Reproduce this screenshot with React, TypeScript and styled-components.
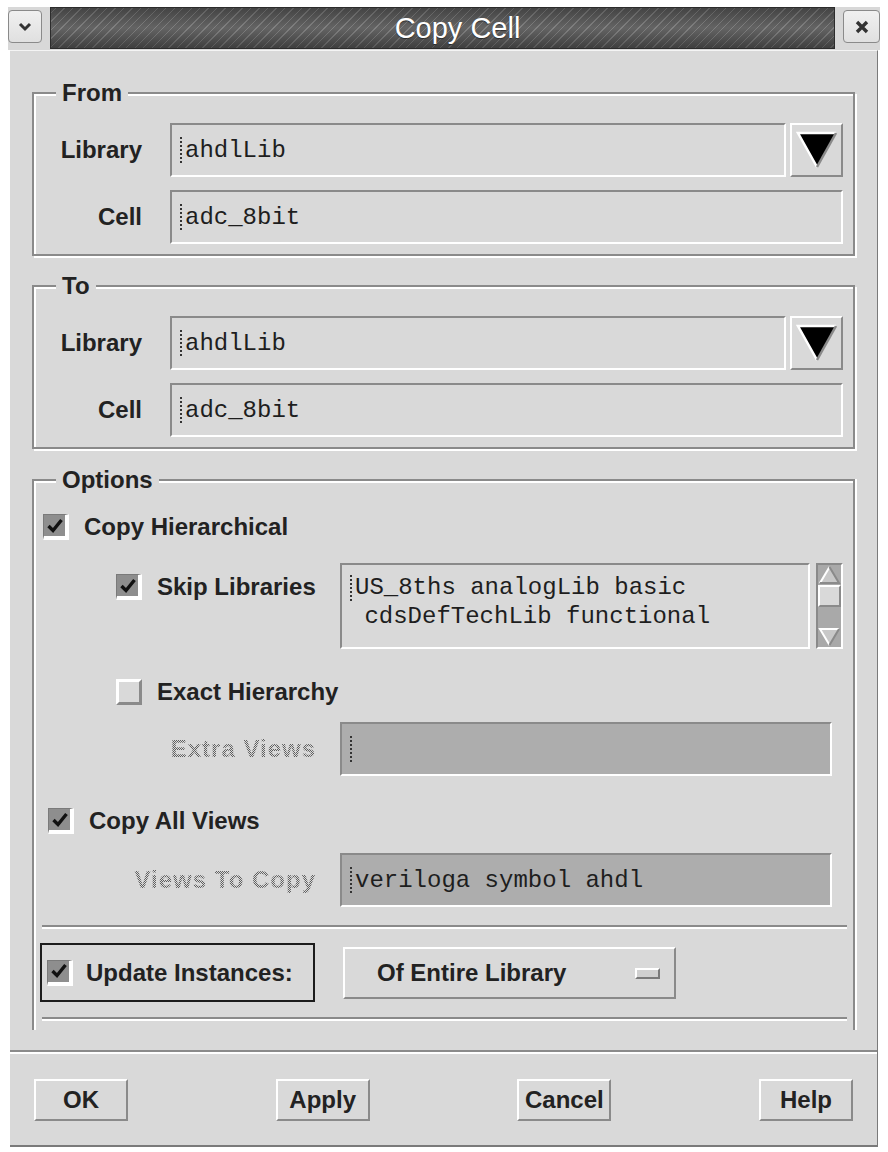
import React from "react";
import styled, { createGlobalStyle, css } from "styled-components";

const GlobalStyle = createGlobalStyle`
  html, body { margin: 0; padding: 0; background: #fff; }
  body { font-family: "Liberation Sans", Arial, sans-serif; color: #1e1e1e; }
`;

const Window = styled.div`
  margin: 7px 0 0 8px;
  width: 872px;
`;

const TitleBar = styled.div`
  display: flex;
  align-items: flex-start;
  gap: 8px;
  height: 43px;
  background: #d8d8d8;
`;

const FrameButton = styled.div<{ $w: number }>`
  width: ${(p) => p.$w}px;
  height: 33px;
  margin-top: 3px;
  box-sizing: border-box;
  border: 1px solid #8a8a8a;
  border-radius: 4px;
  background: linear-gradient(#f0f0f0, #e0e0e0);
  display: flex;
  align-items: center;
  justify-content: center;
  flex: none;
`;

const TitleStrip = styled.div`
  flex: 1;
  height: 42px;
  box-sizing: border-box;
  border: 1px solid #2c2c2c;
  padding-left: 30px;
  background:
    linear-gradient(to bottom, rgba(0, 0, 0, 0.25), rgba(255, 255, 255, 0.06) 50%, rgba(0, 0, 0, 0.3)),
    repeating-linear-gradient(135deg, #5a5a5a 0 3px, #7a7a7a 3px 4px, #5a5a5a 4px 6px);
  display: flex;
  align-items: center;
  justify-content: center;
  color: #fff;
  font-size: 29px;
  text-shadow: 0 1px 1px rgba(0, 0, 0, 0.5);
`;

const Body = styled.div`
  margin-left: 2px;
  width: 868px;
  box-sizing: border-box;
  background: #d9d9d9;
  border-top: 1px solid #f4f4f4;
  border-right: 1px solid #7a7a7a;
  border-bottom: 2px solid #7a7a7a;
  padding: 30px 0 24px 0;
  display: flex;
  flex-direction: column;
`;

const Group = styled.fieldset<{ $open?: boolean; $mt?: number }>`
  margin: ${(p) => p.$mt ?? 0}px 22px 0 22px;
  padding: 0;
  min-width: 0;
  border: 2px solid #8a8a8a;
  box-shadow: inset 2px 2px 0 #fff, 2px 2px 0 #fff;
  ${(p) =>
    p.$open &&
    css`
      border-bottom: none;
      box-shadow: inset 2px 2px 0 #fff, 2px 0 0 #fff;
    `}
`;

const Legend = styled.legend`
  margin-left: 22px;
  padding: 0 6px;
  font-size: 24px;
  line-height: 24px;
  font-weight: bold;
  color: #222;
  background: #d9d9d9;
`;

const FieldGrid = styled.div`
  display: grid;
  grid-template-columns: 108px 1fr;
  column-gap: 28px;
  row-gap: 13px;
  align-items: center;
  padding: 18px 10px 10px 0;
`;

const Label = styled.span`
  text-align: right;
  font-size: 24px;
  font-weight: bold;
  color: #222;
`;

const FieldRow = styled.div`
  display: flex;
  gap: 4px;
`;

const Field = styled.div<{ $disabled?: boolean }>`
  flex: 1;
  height: 54px;
  box-sizing: border-box;
  border-style: solid;
  border-width: 2px;
  border-color: #8a8a8a #fff #fff #8a8a8a;
  background: ${(p) => (p.$disabled ? "#adadad" : "#d9d9d9")};
  display: flex;
  align-items: center;
  padding-left: 8px;
  font-family: "Liberation Mono", "Courier New", monospace;
  font-size: 24px;
  color: #1e1e1e;
  white-space: pre;
`;

const Caret = styled.span`
  display: inline-block;
  width: 3px;
  height: 26px;
  border-left: 2px dotted #333;
  flex: none;
`;

const ComboButton = styled.div`
  width: 53px;
  height: 54px;
  box-sizing: border-box;
  border-style: solid;
  border-width: 2px;
  border-color: #fff #8a8a8a #8a8a8a #fff;
  display: flex;
  align-items: center;
  justify-content: center;
`;

const OptionsBody = styled.div`
  padding: 22px 6px 9px 8px;
  display: flex;
  flex-direction: column;
`;

const CheckRow = styled.div<{ $indent: number; $mt: number }>`
  display: flex;
  align-items: center;
  gap: 15px;
  margin-left: ${(p) => p.$indent}px;
  margin-top: ${(p) => p.$mt}px;
  font-size: 24px;
  font-weight: bold;
  color: #222;
  line-height: 26px;
`;

const Box = styled.span<{ $checked?: boolean }>`
  width: 26px;
  height: 26px;
  box-sizing: border-box;
  flex: none;
  display: inline-flex;
  align-items: center;
  justify-content: center;
  border-style: solid;
  ${(p) =>
    p.$checked
      ? css`
          background: #8e8e8e;
          border-width: 1px 4px 4px 1px;
          border-color: #7a7a7a #fff #fff #7a7a7a;
        `
      : css`
          background: #d9d9d9;
          border-width: 3px;
          border-color: #fff #8a8a8a #8a8a8a #fff;
        `}
`;

const SkipRow = styled.div`
  display: flex;
  margin-top: 23px;
  margin-right: 4px;
`;

const SkipLabel = styled.div`
  width: 298px;
  flex: none;
  padding: 11px 0 0 74px;
  box-sizing: border-box;
`;

const TextArea = styled.div`
  flex: 1;
  height: 86px;
  box-sizing: border-box;
  border-style: solid;
  border-width: 2px;
  border-color: #8a8a8a #fff #fff #8a8a8a;
  padding: 8px 0 0 8px;
  font-family: "Liberation Mono", "Courier New", monospace;
  font-size: 24px;
  line-height: 29px;
  white-space: pre;
  color: #1e1e1e;
`;

const TextLine = styled.div`
  display: flex;
  align-items: center;
`;

const ScrollBar = styled.div`
  width: 27px;
  height: 86px;
  margin-left: 6px;
  box-sizing: border-box;
  background: #a9a9a9;
  border-style: solid;
  border-width: 2px;
  border-color: #8a8a8a #fff #fff #8a8a8a;
  display: flex;
  flex-direction: column;
  align-items: center;
`;

const Thumb = styled.div`
  width: 23px;
  height: 22px;
  box-sizing: border-box;
  background: #d9d9d9;
  border-style: solid;
  border-width: 2px;
  border-color: #fff #8a8a8a #8a8a8a #fff;
`;

const ArrowBottom = styled.div`
  margin-top: auto;
  display: flex;
`;

const EntryRow = styled.div<{ $mt: number }>`
  display: grid;
  grid-template-columns: 274px 1fr;
  column-gap: 24px;
  align-items: center;
  margin: ${(p) => p.$mt}px 15px 0 0;
`;

const DisabledLabel = styled.span`
  text-align: right;
  font-size: 24px;
  font-weight: bold;
  letter-spacing: 1px;
  background: repeating-conic-gradient(#5e5e5e 0 25%, transparent 0 50%) 0 0 / 2px 2px;
  -webkit-background-clip: text;
  background-clip: text;
  color: transparent;
`;

const Separator = styled.div<{ $mt: number }>`
  margin-top: ${(p) => p.$mt}px;
  border-top: 2px solid #8a8a8a;
  border-bottom: 2px solid #fff;
`;

const UpdateRow = styled.div`
  display: flex;
  align-items: flex-start;
  gap: 28px;
  margin: 14px 0 0 -2px;
`;

const UpdateBox = styled.div`
  width: 275px;
  height: 59px;
  box-sizing: border-box;
  border: 2px solid #1c1c1c;
  display: flex;
  align-items: center;
  gap: 13px;
  padding-left: 5px;
  font-size: 24px;
  font-weight: bold;
  color: #222;
`;

const OptionMenu = styled.div`
  width: 333px;
  height: 52px;
  margin-top: 4px;
  box-sizing: border-box;
  border-style: solid;
  border-width: 2px;
  border-color: #fff #8a8a8a #8a8a8a #fff;
  display: flex;
  align-items: center;
  padding: 0 14px 0 32px;
  font-size: 24px;
  font-weight: bold;
  color: #222;
`;

const MenuMark = styled.span`
  margin-left: auto;
  width: 25px;
  height: 11px;
  box-sizing: border-box;
  border-style: solid;
  border-width: 2px;
  border-color: #fff #7a7a7a #7a7a7a #fff;
  background: #d0d0d0;
`;

const DialogRule = styled.div`
  margin-top: 20px;
  border-top: 2px solid #8a8a8a;
  border-bottom: 2px solid #fff;
`;

const ButtonRow = styled.div`
  display: flex;
  justify-content: space-between;
  padding: 25px 24px 0 24px;
`;

const PushButton = styled.div`
  width: 94px;
  height: 42px;
  box-sizing: border-box;
  border-style: solid;
  border-width: 2px;
  border-color: #fff #8a8a8a #8a8a8a #fff;
  display: flex;
  align-items: center;
  justify-content: center;
  font-size: 24px;
  font-weight: bold;
  color: #222;
`;

const Check = () => (
  <svg width="18" height="18" viewBox="0 0 18 18">
    <path d="M2.5 9 L7 13.5 L15.5 3" stroke="#111" strokeWidth="3.4" fill="none" />
  </svg>
);

const DownTriangle = () => (
  <svg width="42" height="38" viewBox="0 0 42 38">
    <polygon points="2,2 40,2 21,36" fill="#000" />
    <polyline points="21,36 2,2 40,2" stroke="#fff" strokeWidth="2.5" fill="none" />
    <line x1="40" y1="2" x2="21" y2="36" stroke="#8a8a8a" strokeWidth="2.5" />
  </svg>
);

const ArrowUp = () => (
  <svg width="23" height="20" viewBox="0 0 23 20">
    <polygon points="11.5,2 21,18 2,18" fill="#c8c8c8" />
    <line x1="11.5" y1="2" x2="2" y2="18" stroke="#fff" strokeWidth="2" />
    <polyline points="11.5,2 21,18 2,18" stroke="#8a8a8a" strokeWidth="2" fill="none" />
  </svg>
);

const ArrowDown = () => (
  <svg width="23" height="20" viewBox="0 0 23 20">
    <polygon points="2,2 21,2 11.5,18" fill="#c8c8c8" />
    <polyline points="11.5,18 2,2 21,2" stroke="#fff" strokeWidth="2" fill="none" />
    <line x1="21" y1="2" x2="11.5" y2="18" stroke="#8a8a8a" strokeWidth="2" />
  </svg>
);

function CheckBox({ checked }: { checked?: boolean }) {
  return <Box $checked={checked}>{checked && <Check />}</Box>;
}

function CellGroup({ title, mt }: { title: string; mt?: number }) {
  return (
    <Group $mt={mt}>
      <Legend>{title}</Legend>
      <FieldGrid>
        <Label>Library</Label>
        <FieldRow>
          <Field>
            <Caret />
            ahdlLib
          </Field>
          <ComboButton>
            <DownTriangle />
          </ComboButton>
        </FieldRow>
        <Label>Cell</Label>
        <Field>
          <Caret />
          adc_8bit
        </Field>
      </FieldGrid>
    </Group>
  );
}

export default function App() {
  return (
    <>
      <GlobalStyle />
      <Window>
        <TitleBar>
          <FrameButton $w={34}>
            <svg width="14" height="10" viewBox="0 0 14 10">
              <polyline points="2,2 7,7 12,2" stroke="#333" strokeWidth="3" fill="none" />
            </svg>
          </FrameButton>
          <TitleStrip>Copy Cell</TitleStrip>
          <FrameButton $w={37}>
            <svg width="14" height="14" viewBox="0 0 14 14">
              <path d="M2 2 L12 12 M12 2 L2 12" stroke="#333" strokeWidth="3.4" />
            </svg>
          </FrameButton>
        </TitleBar>

        <Body>
          <CellGroup title="From" />
          <CellGroup title="To" mt={18} />

          <Group $open $mt={19}>
            <Legend>Options</Legend>
            <OptionsBody>
              <CheckRow $indent={1} $mt={0}>
                <CheckBox checked />
                Copy Hierarchical
              </CheckRow>

              <SkipRow>
                <SkipLabel>
                  <CheckRow $indent={0} $mt={0}>
                    <CheckBox checked />
                    Skip Libraries
                  </CheckRow>
                </SkipLabel>
                <TextArea>
                  <TextLine>
                    <Caret />
                    US_8ths analogLib basic
                  </TextLine>
                  <TextLine> cdsDefTechLib functional</TextLine>
                </TextArea>
                <ScrollBar>
                  <ArrowUp />
                  <Thumb />
                  <ArrowBottom>
                    <ArrowDown />
                  </ArrowBottom>
                </ScrollBar>
              </SkipRow>

              <CheckRow $indent={74} $mt={30}>
                <CheckBox />
                Exact Hierarchy
              </CheckRow>

              <EntryRow $mt={17}>
                <DisabledLabel>Extra Views</DisabledLabel>
                <Field $disabled>
                  <Caret />
                </Field>
              </EntryRow>

              <CheckRow $indent={6} $mt={32}>
                <CheckBox checked />
                Copy All Views
              </CheckRow>

              <EntryRow $mt={19}>
                <DisabledLabel>Views To Copy</DisabledLabel>
                <Field $disabled>
                  <Caret />
                  veriloga symbol ahdl
                </Field>
              </EntryRow>

              <Separator $mt={18} />

              <UpdateRow>
                <UpdateBox>
                  <CheckBox checked />
                  Update Instances:
                </UpdateBox>
                <OptionMenu>
                  Of Entire Library
                  <MenuMark />
                </OptionMenu>
              </UpdateRow>

              <Separator $mt={15} />
            </OptionsBody>
          </Group>

          <DialogRule />

          <ButtonRow>
            <PushButton>OK</PushButton>
            <PushButton>Apply</PushButton>
            <PushButton>Cancel</PushButton>
            <PushButton>Help</PushButton>
          </ButtonRow>
        </Body>
      </Window>
    </>
  );
}
